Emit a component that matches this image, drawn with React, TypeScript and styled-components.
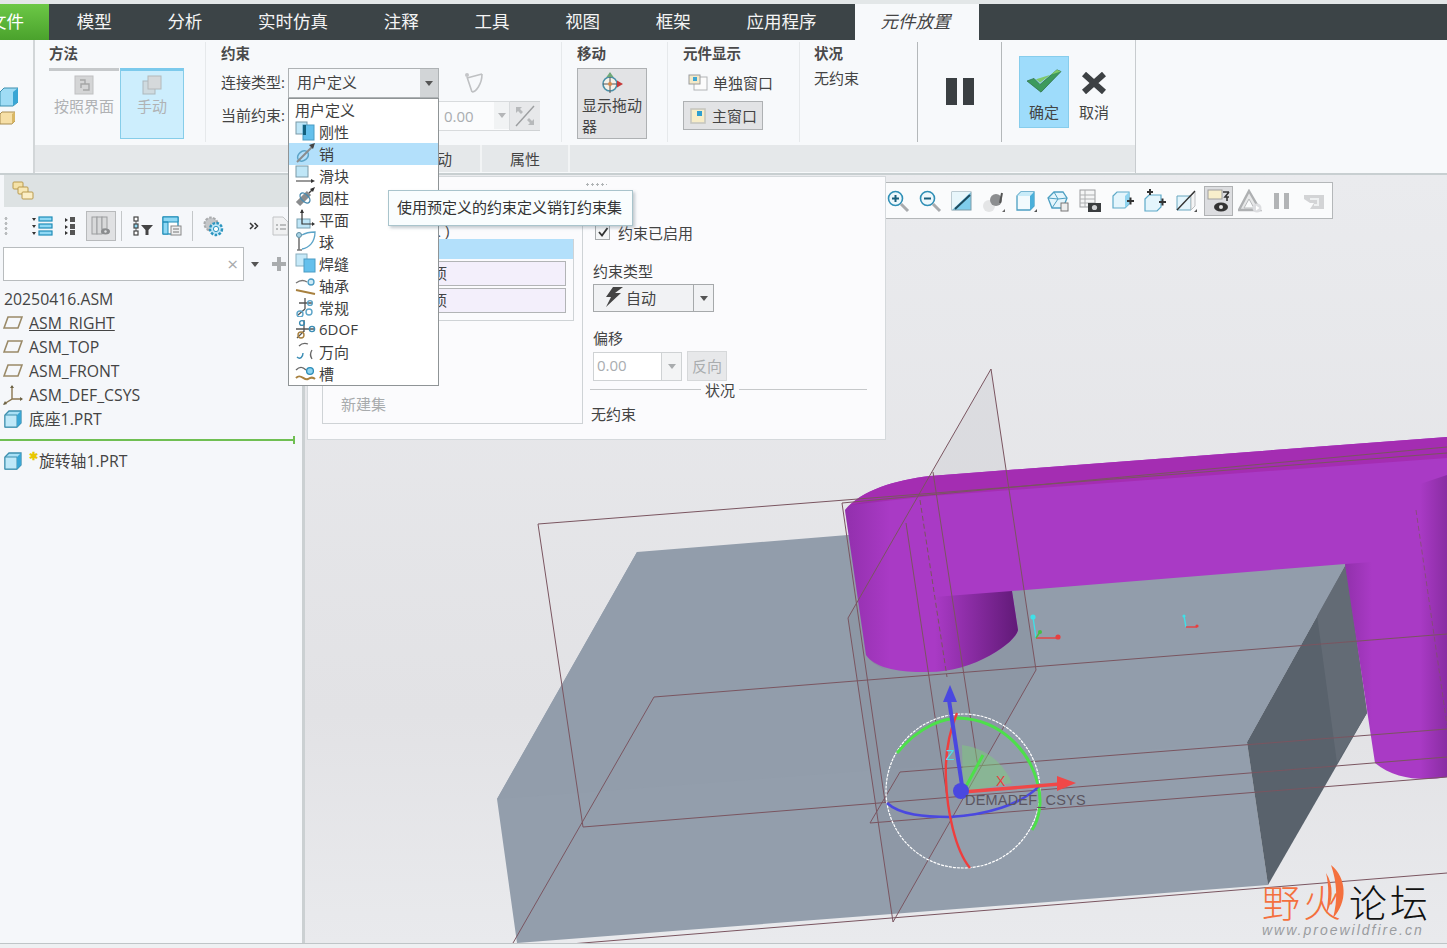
import React from 'react';
import styled, { createGlobalStyle } from 'styled-components';

const GlobalStyle = createGlobalStyle`
  html, body {
    margin: 0;
    padding: 0;
    background: #f7f9fb;
  }
  body {
    font-family: "Open Sans", "Noto Sans CJK SC", sans-serif;
    color: #444;
  }
  * { box-sizing: border-box; }
`;

const Page = styled.div`
  position: relative;
  width: 1447px;
  height: 948px;
  overflow: hidden;
  display: flex;
  flex-direction: column;
  background: #f7f9fb;
`;

const TopStrip = styled.div`
  height: 4px;
  background: #e3e7e8;
`;

const TabBar = styled.div`
  height: 36px;
  display: flex;
  align-items: center;
  background: #3c4447;
  color: #f4f4f4;
  font-size: 17.5px;
`;

const FileTab = styled.div`
  width: 49px;
  height: 100%;
  display: flex;
  align-items: center;
  justify-content: flex-end;
  padding: 0 25px 3px 0;
  white-space: nowrap;
  background: linear-gradient(#6cc846, #4aa22c);
  color: #fff;
`;

const Tab = styled.div`
  height: 100%;
  display: flex;
  align-items: center;
  padding: 0 28px 3px 27.7px;
  white-space: nowrap;
`;

const ActiveTab = styled.div`
  width: 124px;
  height: 100%;
  margin-left: 10px;
  display: flex;
  align-items: center;
  justify-content: center;
  padding: 0 2px 3px 0;
  background: #f7f9fb;
  color: #444;
  font-style: italic;
`;

const Ribbon = styled.div`
  height: 135px;
  display: flex;
  border-bottom: 2px solid #c8cfd1;
`;

const Rail = styled.div`
  width: 35px;
  display: flex;
  flex-direction: column;
  padding-top: 47px;
  gap: 4px;
  border-right: 2px solid #d2d6d8;
`;

const RibbonBody = styled.div`
  width: 1101px;
  display: flex;
  flex-direction: column;
  border-right: 1px solid #c8cccf;
`;

const RibbonGroups = styled.div`
  height: 105px;
  display: flex;
`;

const Group = styled.div<{ $w: number; $strong?: boolean; $pad?: number; $last?: boolean }>`
  width: ${({ $w }) => $w}px;
  margin-top: 2px;
  margin-bottom: 3px;
  padding: 3px 0 0 ${({ $pad }) => $pad ?? 14}px;
  border-right: ${({ $last, $strong }) =>
    $last ? '0' : `1px solid ${$strong ? '#b4b8ba' : '#e6e9eb'}`};
`;

const GroupTitle = styled.div`
  height: 20px;
  margin-bottom: 3px;
  padding-bottom: 2px;
  font-size: 14.5px;
  font-weight: 700;
  line-height: 18px;
  color: #4a4a4a;
`;

const Row = styled.div<{ $gap?: number; $top?: number }>`
  display: flex;
  align-items: center;
  gap: ${({ $gap }) => $gap ?? 0}px;
  margin-top: ${({ $top }) => $top ?? 0}px;
`;

const MethodButton = styled.div<{ $w: number; $active?: boolean }>`
  width: ${({ $w }) => $w}px;
  height: 71px;
  display: flex;
  flex-direction: column;
  align-items: center;
  padding-top: 4px;
  font-size: 15px;
  line-height: 22px;
  color: #b0b2b4;
  border-top: 3px solid ${({ $active }) => ($active ? '#7ccaec' : '#c6c9cb')};
  ${({ $active }) =>
    $active &&
    `background:#cdeefd;border-left:1px solid #86cde9;border-right:1px solid #86cde9;border-bottom:1px solid #86cde9;`}
`;

const FieldLabel = styled.div`
  width: 67px;
  padding-bottom: 3px;
  font-size: 15px;
  white-space: nowrap;
`;

const SelectBox = styled.div`
  width: 151px;
  height: 30px;
  display: flex;
  align-items: center;
  justify-content: space-between;
  padding-left: 8px;
  font-size: 15px;
  line-height: 26px;
  background: #f7f9fb;
  border: 1px solid #aeb2b4;
`;

const SelectText = styled.span`
  margin-top: -3px;
`;

const SelectArrow = styled.div`
  width: 18px;
  height: 100%;
  display: flex;
  align-items: center;
  justify-content: center;
  background: #d2d5d7;
`;

const Caret = styled.span<{ $c?: string }>`
  width: 0;
  height: 0;
  border-left: 4px solid transparent;
  border-right: 4px solid transparent;
  border-top: 5px solid ${({ $c }) => $c ?? '#555'};
`;

const PinSlot = styled.div`
  margin-left: 24px;
  display: flex;
`;

const HiddenField = styled.div`
  width: 151px;
  height: 30px;
`;

const ValueField = styled.div`
  width: 71px;
  height: 30px;
  display: flex;
  align-items: center;
  justify-content: space-between;
  padding: 0 0 1px 5px;
  font-size: 15px;
  color: #a9adb0;
  border: 1px solid #d8dbdd;
  border-left: 0;
  background: #fbfcfd;
`;

const ValueArrow = styled.div`
  width: 15px;
  height: 100%;
  display: flex;
  align-items: center;
  justify-content: center;
  background: #f1f3f4;
`;

const FlipButton = styled.div`
  width: 30px;
  height: 30px;
  display: flex;
  align-items: center;
  justify-content: center;
  background: #e7e8ea;
  border-bottom: 1px solid #cfd2d4;
  border-top: 1px solid #cfd2d4;
`;

const DragButton = styled.div`
  width: 70px;
  height: 71px;
  padding: 3px 0 0 4px;
  font-size: 15px;
  line-height: 21px;
  background: #e2e3e5;
  border: 1px solid #aeb1b3;
`;

const DragIcon = styled.div`
  display: flex;
  justify-content: center;
  height: 23px;
  margin-right: 4px;
`;

const DisplayOption = styled.div<{ $active?: boolean }>`
  width: 100px;
  height: 29px;
  display: flex;
  align-items: center;
  gap: 5px;
  padding-left: 5px;
  font-size: 15px;
  white-space: nowrap;
  ${({ $active }) => $active && `width:80px;background:#e2e3e5;border:1px solid #aeb1b3;`}
`;

const DisplayColumn = styled.div`
  display: flex;
  flex-direction: column;
  gap: 4px;
`;

const StatusText = styled.div`
  font-size: 15px;
  margin-top: -1px;
`;

const PauseBars = styled.div`
  height: 100%;
  display: flex;
  align-items: center;
  justify-content: center;
  gap: 6px;
  padding-bottom: 5px;
`;

const PauseBar = styled.span`
  width: 11px;
  height: 27px;
  background: #3a3f42;
`;

const ConfirmRow = styled.div`
  display: flex;
  gap: 10px;
  padding: 11px 0 0 3px;
`;

const ConfirmButton = styled.div<{ $ok?: boolean }>`
  width: ${({ $ok }) => ($ok ? 50 : 30)}px;
  height: 72px;
  display: flex;
  flex-direction: column;
  align-items: center;
  padding-top: ${({ $ok }) => ($ok ? 12 : 16)}px;
  gap: ${({ $ok }) => ($ok ? 9 : 8)}px;
  font-size: 15px;
  line-height: 20px;
  ${({ $ok }) => $ok && `background:#9edcfb;border:1px solid #87cdec;`}
`;

const SubTabs = styled.div`
  height: 27px;
  display: flex;
  background: #e5e8ea;
`;

const SubSpacer = styled.div`
  width: 359px;
`;

const SubTab = styled.div`
  width: 88px;
  display: flex;
  align-items: center;
  justify-content: center;
  font-size: 15px;
  border-right: 2px solid #f2f4f5;
`;

const Body = styled.div`
  flex: 1;
  display: flex;
  min-height: 0;
`;

const Sidebar = styled.div`
  width: 302px;
  display: flex;
  flex-direction: column;
  background: #f5f7fa;
`;

const Splitter = styled.div`
  width: 3px;
  background: #cbd0d2;
`;

const SideHeader = styled.div`
  height: 32px;
  margin-left: 4px;
  padding: 6px 0 0 8px;
  background: #dde2e3;
`;

const SideTools = styled.div`
  height: 38px;
  display: flex;
  align-items: center;
  padding-left: 4px;
`;

const GripDots = styled.div`
  width: 4px;
  height: 20px;
  margin-right: 22px;
  background: radial-gradient(circle, #b9bcbe 1.4px, transparent 1.6px) 0 0 / 4px 5px;
`;

const SideTool = styled.div<{ $w: number; $active?: boolean; $pl?: number }>`
  width: ${({ $w }) => $w}px;
  height: 30px;
  display: flex;
  align-items: center;
  justify-content: center;
  padding-left: ${({ $pl }) => $pl ?? 0}px;
  ${({ $active }) => $active && `background:#e0e1e3;border:1px solid #b8babc;`}
`;

const ToolDivider = styled.div<{ $l: number; $r: number }>`
  width: 1px;
  height: 30px;
  margin: 0 ${({ $r }) => $r}px 0 ${({ $l }) => $l}px;
  background: #c4c7c9;
`;

const SearchRow = styled.div`
  height: 34px;
  margin: 2px 0 6px 3px;
  display: flex;
  align-items: center;
`;

const SearchInput = styled.div`
  width: 241px;
  height: 100%;
  display: flex;
  align-items: center;
  justify-content: flex-end;
  padding-right: 5px;
  font-size: 19px;
  color: #a8aaac;
  background: #fff;
  border: 1px solid #b8bcbe;
`;

const SearchCaret = styled.div`
  width: 22px;
  display: flex;
  justify-content: center;
`;

const SearchPlus = styled.div`
  margin-left: 6px;
  width: 14px;
  height: 14px;
  background:
    linear-gradient(#a9acae, #a9acae) center / 100% 4px no-repeat,
    linear-gradient(#a9acae, #a9acae) center / 4px 100% no-repeat;
`;

const TreeRow = styled.div<{ $indent?: number }>`
  height: 24px;
  display: flex;
  align-items: center;
  gap: 6px;
  padding-left: ${({ $indent }) => $indent ?? 3}px;
  font-size: 15.8px;
  line-height: 22px;
  color: #444;
  white-space: nowrap;
`;

const TreeLabel = styled.span<{ $underline?: boolean }>`
  margin-top: -1px;
  text-decoration: ${({ $underline }) => ($underline ? 'underline' : 'none')};
`;

const InsertLine = styled.div`
  position: relative;
  height: 2px;
  width: 295px;
  margin: 8px 0 8px;
  background: #6fbf52;
  &::after {
    content: '';
    position: absolute;
    right: 0;
    top: -3px;
    width: 2px;
    height: 8px;
    background: #6fbf52;
  }
`;

const NewStar = styled.span`
  margin-right: -5px;
  align-self: flex-start;
  margin-top: 1px;
  font-size: 11px;
  line-height: 12px;
  color: #e8c800;
  font-weight: 700;
`;

const Canvas = styled.div`
  position: relative;
  flex: 1;
  background: linear-gradient(#eaebee, #e2e2e5 70%, #e9eaed);
`;

const Scene = styled.svg`
  display: block;
  width: 100%;
  height: 100%;
`;

const ViewToolbar = styled.div`
  position: absolute;
  left: 576px;
  top: 7px;
  width: 452px;
  height: 37px;
  display: flex;
  align-items: center;
  background: #fafbfc;
  border: 1px solid #b4b7b9;
`;

const ViewButton = styled.div<{ $active?: boolean }>`
  width: 32px;
  height: 30px;
  display: flex;
  align-items: center;
  justify-content: center;
  ${({ $active }) => $active && `width:29px;margin:0 1px 0 2px;background:#dcdde0;border:1px solid #b0b2b4;`}
`;

const FloatingPanel = styled.div`
  position: absolute;
  left: 2px;
  top: 1px;
  width: 579px;
  height: 264px;
  display: flex;
  background: #fbfbfd;
  border: 1px solid #d5d9dc;
`;

const PanelGrip = styled.div`
  position: absolute;
  left: 277px;
  top: 6px;
  width: 22px;
  height: 3px;
  background: radial-gradient(circle, #b0b4b6 1px, transparent 1.3px) 0 0 / 5px 3px;
`;

const SetBox = styled.div`
  width: 261px;
  height: 224px;
  margin: 23px 0 0 14px;
  display: flex;
  flex-direction: column;
  background: #fbfbfd;
  border: 1px solid #cfd3d6;
  border-top: 0;
`;

const SetHead = styled.div`
  height: 16px;
  padding-left: 103px;
  font-size: 15px;
  line-height: 14px;
  margin-top: 23px;
  white-space: pre;
`;

const SetInner = styled.div`
  width: 251px;
  padding-bottom: 7px;
  border-right: 1px solid #cfd3d6;
  border-bottom: 1px solid #cfd3d6;
`;

const SetTitle = styled.div`
  height: 20px;
  background: #b3e0fb;
`;

const SetItem = styled.div`
  width: 243px;
  height: 25px;
  margin-top: 2px;
  padding-right: 118px;
  text-align: right;
  font-size: 15px;
  line-height: 22px;
  white-space: nowrap;
  overflow: hidden;
  background: #f3effb;
  border: 1px solid #b2b4b6;
`;

const NewSet = styled.div`
  margin-top: auto;
  padding: 0 0 9px 18px;
  font-size: 15px;
  color: #a8abad;
`;

const PanelRight = styled.div`
  width: 290px;
  margin-left: 8px;
  padding: 46px 0 0 2px;
  display: flex;
  flex-direction: column;
  font-size: 15px;
`;

const CheckRow = styled.div`
  display: flex;
  align-items: center;
  gap: 8px;
  padding-left: 2px;
  height: 18px;
`;

const CheckBox = styled.div`
  width: 15px;
  height: 15px;
  display: flex;
  align-items: center;
  justify-content: center;
  background: #f4f5f6;
  border: 1px solid #a8abad;
`;

const PanelLabel = styled.div<{ $top: number }>`
  margin-top: ${({ $top }) => $top}px;
  height: 20px;
  line-height: 20px;
`;

const TypeSelect = styled.div`
  width: 121px;
  height: 28px;
  margin-top: 3px;
  display: flex;
  background: #f1f2f4;
  border: 1px solid #a6a9ab;
`;

const TypeValue = styled.div`
  flex: 1;
  display: flex;
  align-items: center;
  gap: 3px;
  padding: 0 0 2px 11px;
  border-right: 1px solid #a6a9ab;
`;

const TypeArrow = styled.div`
  width: 19px;
  display: flex;
  align-items: center;
  justify-content: center;
`;

const OffsetField = styled.div`
  width: 89px;
  height: 29px;
  display: flex;
  border: 1px solid #cfd2d4;
  background: #fff;
  color: #a9adb0;
  font-size: 15px;
`;

const OffsetValue = styled.div`
  flex: 1;
  padding-left: 3px;
  line-height: 25px;
  border-right: 1px solid #cfd2d4;
`;

const OffsetArrow = styled.div`
  width: 19px;
  display: flex;
  align-items: center;
  justify-content: center;
  background: #f3f4f5;
`;

const ReverseButton = styled.div`
  width: 40px;
  height: 30px;
  display: flex;
  align-items: center;
  justify-content: center;
  padding-bottom: 1px;
  color: #aaadaf;
  background: #e7e8ea;
  border: 1px solid #d6d8da;
`;

const StatusRule = styled.div`
  width: 277px;
  height: 16px;
  margin: 0 0 0 -3px;
  display: flex;
  align-items: center;
  gap: 4px;
  &::before,
  &::after {
    content: '';
    height: 1px;
    background: #c6c8ca;
  }
  &::before {
    flex: 0 0 111px;
  }
  &::after {
    flex: 1;
  }
`;

const StatusNote = styled.div`
  margin: 6px 0 0 -2px;
`;

const Dropdown = styled.div`
  position: absolute;
  left: 288px;
  top: 98px;
  width: 151px;
  background: #fff;
  border: 1px solid #8f9496;
  font-size: 15px;
`;

const DropRow = styled.div<{ $selected?: boolean }>`
  height: 22px;
  display: flex;
  align-items: center;
  gap: 3px;
  padding: 0 0 2px 6px;
  color: #3e3e3e;
  background: ${({ $selected }) => ($selected ? '#b3e0fb' : 'transparent')};
`;

const Tooltip = styled.div`
  position: absolute;
  left: 388px;
  top: 190px;
  width: 245px;
  height: 36px;
  padding-left: 8px;
  font-size: 15px;
  line-height: 32px;
  color: #333;
  white-space: nowrap;
  background: #f9fdfe;
  border: 1px solid #a9c4cc;
  box-shadow: 2px 2px 3px rgba(90, 110, 120, 0.35);
`;

const Watermark = styled.div`
  position: absolute;
  left: 957px;
  top: 708px;
  width: 170px;
`;

const WatermarkTitle = styled.div`
  display: flex;
  height: 38px;
  font-size: 38px;
  line-height: 38px;
  font-weight: 300;
  letter-spacing: 3px;
  white-space: nowrap;
  color: #111;
  overflow: hidden;
`;

const Fire = styled.span`
  color: #f4703e;
  margin-right: 5px;
`;

const WatermarkUrl = styled.div`
  margin-top: 1px;
  font-family: "Liberation Sans", sans-serif;
  font-size: 14px;
  line-height: 16px;
  font-style: italic;
  letter-spacing: 2px;
  color: #9a9c9f;
  white-space: nowrap;
`;

const BottomStrip = styled.div`
  height: 5px;
  background: #eef0f2;
  border-top: 1px solid #bfc5c7;
`;

/* ---------- icons ---------- */

const Cube = ({ s = 20 }: { s?: number }) => (
  <svg width={s} height={s} viewBox="0 0 20 20">
    <path d="M2 6 L6 2 H18 V14 L14 18 H2 Z" fill="#a9e0f6" stroke="#3d8fae" strokeWidth="1.3" />
    <path d="M2 6 H14 V18 H2 Z" fill="#bfe8f8" stroke="#3d8fae" strokeWidth="1" />
    <path d="M14 6 L18 2 V14 L14 18 Z" fill="#3aa6d4" />
  </svg>
);

const DatumPlane = () => (
  <svg width="20" height="20" viewBox="0 0 20 20">
    <path d="M5 4 H19 L15 15 H1 Z" fill="none" stroke="#9a8a68" strokeWidth="1.6" />
  </svg>
);

const CsysIcon = () => (
  <svg width="20" height="22" viewBox="0 0 20 22">
    <path d="M9 2 V15 L1 20 M9 15 H19" fill="none" stroke="#8a7650" strokeWidth="1.4" />
    <path d="M9 1 L7 4 H11 Z M20 15 L17 13 V17 Z M0 21 L2 17 L4 20 Z" fill="#6d6346" />
  </svg>
);

const LayersIcon = () => (
  <svg width="22" height="20" viewBox="0 0 22 20">
    <rect x="1" y="1" width="10" height="7" rx="1" fill="#f5e2a8" stroke="#b99a4e" />
    <rect x="6" y="6" width="10" height="7" rx="1" fill="#f8e8b6" stroke="#b99a4e" />
    <rect x="10" y="11" width="11" height="7" rx="1" fill="#fbeec6" stroke="#b99a4e" />
  </svg>
);

const ListIcon = () => (
  <svg width="21" height="20" viewBox="0 0 21 20">
    <path d="M0 2 H4 L2 5 Z M0 9 H4 L2 12 Z M0 16 H4 L2 19 Z" fill="#333" />
    <g fill="#8fd8f4" stroke="#1f8db8" strokeWidth="1.2">
      <rect x="7" y="1" width="13" height="4" />
      <rect x="7" y="8" width="13" height="4" />
      <rect x="7" y="15" width="13" height="4" />
    </g>
  </svg>
);

const NodeListIcon = () => (
  <svg width="11" height="20" viewBox="0 0 11 20">
    <path d="M0 2 L3 4 L0 6 Z M0 9 L3 11 L0 13 Z M0 15 L3 17 L0 19 Z" fill="#333" />
    <g fill="#555">
      <rect x="5" y="1" width="5" height="5" />
      <rect x="5" y="8" width="5" height="5" />
      <rect x="5" y="14" width="5" height="5" />
    </g>
  </svg>
);

const ColumnsEyeIcon = () => (
  <svg width="20" height="20" viewBox="0 0 20 20">
    <g fill="#d8d9da" stroke="#9b9d9f">
      <rect x="1" y="1" width="5" height="17" />
      <rect x="6" y="1" width="5" height="17" />
      <rect x="11" y="1" width="5" height="12" />
    </g>
    <ellipse cx="14.5" cy="15.5" rx="4.5" ry="3" fill="#8a8c8e" />
    <circle cx="14.5" cy="15.5" r="1.2" fill="#e0e1e3" />
  </svg>
);

const TreeFilterIcon = () => (
  <svg width="20" height="20" viewBox="0 0 20 20">
    <path d="M3 5 V15" stroke="#666" />
    <g fill="#fff" stroke="#444" strokeWidth="1.2">
      <rect x="1" y="1" width="4" height="4" />
      <rect x="1" y="8" width="4" height="4" fill="#8fd8f4" />
      <rect x="1" y="15" width="4" height="4" />
    </g>
    <path d="M8 9 H20 L15.5 14 V19 H12.5 V14 Z" fill="#444" />
  </svg>
);

const TableDocIcon = () => (
  <svg width="20" height="20" viewBox="0 0 20 20">
    <rect x="1" y="1" width="15" height="17" fill="#fff" stroke="#1f8db8" strokeWidth="1.3" />
    <path d="M1 1 H16 V6 H1 Z M1 6 H6 V18 H1 Z" fill="#8fd8f4" stroke="#1f8db8" />
    <rect x="9" y="10" width="10" height="9" fill="#eeeff0" stroke="#888" />
    <path d="M11 13 H17 M11 16 H17" stroke="#777" />
  </svg>
);

const GearIcon = () => (
  <svg width="21" height="21" viewBox="0 0 21 21">
    <circle cx="8" cy="8" r="6.5" fill="#c4c6c8" stroke="#a8aaac" strokeWidth="2" strokeDasharray="2.5 1.5" />
    <circle cx="13" cy="13" r="6" fill="#bfe6f7" stroke="#2b95bf" strokeWidth="2.4" strokeDasharray="2.6 1.4" />
    <circle cx="13" cy="13" r="2.6" fill="#fff" stroke="#2b95bf" />
  </svg>
);

const DoubleChevron = () => (
  <svg width="10" height="8" viewBox="0 0 10 8">
    <path d="M1 1 L4 4 L1 7 M5.5 1 L8.5 4 L5.5 7" fill="none" stroke="#333" strokeWidth="1.5" />
  </svg>
);

const DocListIcon = () => (
  <svg width="17" height="20" viewBox="0 0 17 20">
    <path d="M1 1 H11 L16 6 V19 H1 Z" fill="#f0f1f2" stroke="#c2c4c6" />
    <path d="M4 9 H6 M8 9 H14 M4 13 H6 M8 13 H14" stroke="#a8aaac" strokeWidth="1.4" />
  </svg>
);

const GuideIcon = () => (
  <svg width="20" height="20" viewBox="0 0 20 20">
    <rect x="1" y="1" width="18" height="18" fill="#d4d5d6" stroke="#bfc0c1" />
    <path d="M6 5 H11 V9 H7 V13 M11 9 H15 V15 H9" fill="none" stroke="#a5a6a7" strokeWidth="1.4" />
  </svg>
);

const ManualIcon = () => (
  <svg width="20" height="20" viewBox="0 0 20 20">
    <rect x="1" y="6" width="12" height="13" fill="#cfdbe0" stroke="#adb8bd" />
    <rect x="6" y="1" width="13" height="13" fill="#d5d9db" stroke="#b4b8ba" />
  </svg>
);

const PinDisabledIcon = () => (
  <svg width="22" height="22" viewBox="0 0 22 22">
    <circle cx="4" cy="3" r="2" fill="#c4c6c8" />
    <path d="M4 5 L9 20 M4 6 L19 2 M19 2 C19 12 13 20 9 20" fill="none" stroke="#bfc1c3" strokeWidth="1.6" />
  </svg>
);

const FlipIcon = () => (
  <svg width="24" height="24" viewBox="0 0 24 24">
    <path d="M3 22 L21 2" stroke="#9c9ea0" strokeWidth="1.4" />
    <path d="M3 3 H9 L7 5 L10 8 L8 10 L5 7 L3 9 Z M21 21 H15 L17 19 L14 16 L16 14 L19 17 L21 15 Z" fill="#b7b9bb" />
  </svg>
);

const DraggerIcon = () => (
  <svg width="24" height="22" viewBox="0 0 24 22">
    <circle cx="10" cy="12" r="7" fill="#f6f2e8" stroke="#4a90a8" strokeWidth="1.6" />
    <path d="M10 1 V21 M3 12 H21" stroke="#555" />
    <path d="M10 0 L6.5 5 H13.5 Z" fill="#6fa878" />
    <path d="M23 12 L17 8.5 V15.5 Z" fill="#c63a3a" />
    <circle cx="10" cy="12" r="2" fill="#d98a4a" />
  </svg>
);

const WindowSingleIcon = () => (
  <svg width="20" height="18" viewBox="0 0 20 18">
    <rect x="6" y="3" width="13" height="13" fill="#fbfbfb" stroke="#b2b4b6" />
    <rect x="1" y="1" width="11" height="9" fill="#f3e9c8" stroke="#9a9c9e" />
    <rect x="5" y="3" width="4" height="4" fill="#3fa6d2" />
  </svg>
);

const WindowMainIcon = () => (
  <svg width="18" height="18" viewBox="0 0 18 18">
    <rect x="2" y="2" width="14" height="14" fill="#f7edc8" stroke="#c6c6c0" strokeWidth="1.6" />
    <rect x="8" y="4" width="5" height="5" fill="#2f9fd0" />
  </svg>
);

const CheckMark = () => (
  <svg width="36" height="24" viewBox="0 0 36 28" preserveAspectRatio="none">
    <path d="M1 14 L8 11 L14 18 L31 1 L35 3 L15 27 Z" fill="#3d9a5c" stroke="#2f6f48" strokeWidth="0.8" />
    <path d="M10 12 L14 16 L31 1 L35 3 Z" fill="#7fc96a" />
  </svg>
);

const CrossMark = () => (
  <svg width="26" height="22" viewBox="0 0 26 22">
    <path d="M3 2 L23 20 M23 2 L3 20" stroke="#3d4144" strokeWidth="6" />
  </svg>
);

const BoltIcon = () => (
  <svg width="18" height="22" viewBox="0 0 18 22">
    <path d="M8 1 H18 L10 7 H16 L1 21 L6 11 H1 Z" fill="#444" />
  </svg>
);

const RailCubes = () => (
  <>
    <svg width="18" height="20" viewBox="0 0 18 20">
      <path d="M0 5 L4 1 H18 V15 L13 19 H0 Z" fill="#9fdcf5" stroke="#3d8fae" />
      <path d="M13 5 L18 1 V15 L13 19 Z" fill="#3aa6d4" />
    </svg>
    <svg width="15" height="14" viewBox="0 0 15 14">
      <path d="M0 3 L2 1 H15 V10 L12 13 H0 Z" fill="#f6dfa6" stroke="#a98e52" />
      <path d="M12 3 L15 1 V10 L12 13 Z" fill="#d9b765" />
    </svg>
  </>
);

const dropIcons: Record<string, React.ReactNode> = {
  rigid: (
    <>
      <rect x="1" y="1" width="11" height="12" fill="#bfe6f7" stroke="#7a9aa8" />
      <rect x="8" y="4" width="11" height="15" fill="#64c0ec" stroke="#4a9cc4" />
      <rect x="8" y="4" width="3" height="10" fill="#12607e" />
    </>
  ),
  pin: (
    <>
      <ellipse cx="8" cy="13" rx="6" ry="4.5" fill="none" stroke="#5ca4c8" strokeWidth="1.5" transform="rotate(-40 8 13)" />
      <path d="M2 19 L18 3" stroke="#8a8c8e" strokeWidth="2" />
      <path d="M20 0 L14 2 L18 6 Z" fill="#444" />
    </>
  ),
  slider: (
    <>
      <rect x="1" y="1" width="12" height="11" fill="#bfe6f7" stroke="#7a9aa8" />
      <path d="M1 16 H17" stroke="#555" strokeWidth="1.2" />
      <path d="M20 16 L16 14 V18 Z" fill="#333" />
    </>
  ),
  cylinder: (
    <>
      <path d="M3 17 L14 6" stroke="#8a8c8e" strokeWidth="6" />
      <ellipse cx="10" cy="11" rx="6" ry="3.5" fill="none" stroke="#4a8cb0" strokeWidth="1.5" transform="rotate(45 10 11)" />
      <path d="M14 6 L18 2" stroke="#444" strokeWidth="1.4" />
      <path d="M20 0 L15 2 L18 5 Z" fill="#333" />
    </>
  ),
  planar: (
    <>
      <rect x="2" y="10" width="13" height="9" fill="#bfe6f7" stroke="#7aa0b0" />
      <path d="M7 1 V15 H18" fill="none" stroke="#333" strokeWidth="1.2" />
      <path d="M7 0 L5 4 H9 Z M20 15 L17 13 V17 Z" fill="#333" />
    </>
  ),
  ball: (
    <>
      <circle cx="4" cy="4" r="2.5" fill="#a8d4e6" stroke="#5a8aa0" />
      <path d="M4 7 V19 M2 19 H7" stroke="#777" strokeWidth="1.6" />
      <path d="M7 4 C12 1 17 1 20 1 C20 11 14 17 7 18" fill="none" stroke="#5ca4c8" strokeWidth="1.3" />
    </>
  ),
  weld: (
    <>
      <rect x="1" y="1" width="11" height="12" fill="#c6e9f8" stroke="#8ab0c0" />
      <rect x="9" y="6" width="11" height="13" fill="#64c0ec" stroke="#4a9cc4" />
    </>
  ),
  bearing: (
    <>
      <path d="M1 8 C5 5 9 5 12 7" fill="none" stroke="#777" strokeWidth="1.3" />
      <circle cx="16" cy="7" r="3" fill="#cdeaf6" stroke="#4a9cc4" strokeWidth="1.3" />
      <path d="M1 15 L20 19" stroke="#a8803e" strokeWidth="2" />
    </>
  ),
  general: (
    <>
      <path d="M10 1 V12 M4 6 H17 M3 18 L10 12" stroke="#555" strokeWidth="1.3" />
      <circle cx="5" cy="17" r="3" fill="none" stroke="#5ca4c8" strokeWidth="1.4" />
      <circle cx="14" cy="15" r="3" fill="none" stroke="#5ca4c8" strokeWidth="1.4" />
      <circle cx="15" cy="6" r="2.4" fill="none" stroke="#5ca4c8" strokeWidth="1.4" />
    </>
  ),
  dof: (
    <>
      <path d="M9 1 V13 M1 10 H20 M2 19 L9 12" stroke="#555" strokeWidth="1.3" />
      <circle cx="17" cy="10" r="2.6" fill="none" stroke="#3a8cb4" strokeWidth="1.4" />
      <circle cx="6" cy="16" r="3" fill="none" stroke="#a8803e" strokeWidth="1.4" />
      <circle cx="7" cy="4" r="2.4" fill="none" stroke="#3a8cb4" strokeWidth="1.4" />
    </>
  ),
  universal: (
    <>
      <path d="M4 5 C7 2 10 2 13 3" fill="none" stroke="#666" strokeWidth="1.3" />
      <path d="M8 12 C8 16 5 19 2 16" fill="none" stroke="#3a8cb4" strokeWidth="1.4" />
      <path d="M17 9 C15 12 15 15 17 18" fill="none" stroke="#666" strokeWidth="1.3" />
    </>
  ),
  slot: (
    <>
      <path d="M1 7 C5 3 8 4 11 7" fill="none" stroke="#666" strokeWidth="1.3" />
      <circle cx="15" cy="8" r="3.4" fill="#8fd4f0" stroke="#2b8cb8" strokeWidth="1.3" />
      <path d="M1 15 C6 10 9 18 13 16 C16 14 18 14 20 16" fill="none" stroke="#a8803e" strokeWidth="2" />
    </>
  ),
};

const DropIcon = ({ name }: { name: string }) => (
  <svg width="21" height="20" viewBox="0 0 21 20">
    {dropIcons[name]}
  </svg>
);

const smallCube = (
  <path d="M3 7 L7 3 H19 V15 L15 19 H3 Z" fill="#e4f5fc" stroke="#5eaac8" strokeWidth="1.2" />
);

const viewIcons: React.ReactNode[] = [
  <>
    <circle cx="9.5" cy="9.5" r="7" fill="#eef8fc" stroke="#2f8fb6" strokeWidth="1.6" />
    <path d="M6 9.5 H13 M9.5 6 V13" stroke="#1a5f7c" strokeWidth="2" />
    <path d="M15 15 L22 22" stroke="#a9abad" strokeWidth="3" />
  </>,
  <>
    <circle cx="9.5" cy="9.5" r="7" fill="#eef8fc" stroke="#2f8fb6" strokeWidth="1.6" />
    <path d="M6 9.5 H13" stroke="#1a5f7c" strokeWidth="2" />
    <path d="M15 15 L22 22" stroke="#a9abad" strokeWidth="3" />
  </>,
  <>
    <rect x="2" y="3" width="19" height="18" fill="#7fcdec" stroke="#7f9ca8" />
    <path d="M2 3 H21 L2 21 Z" fill="#e8f6fb" />
    <path d="M5 20 L20 6" stroke="#1c4a5e" strokeWidth="2" />
  </>,
  <>
    <circle cx="7" cy="17" r="6" fill="#e4e5e6" />
    <circle cx="14" cy="11" r="6" fill="#8c8e90" />
    <path d="M20 4 L18 14" stroke="#555" strokeWidth="2" />
    <path d="M23 20 L23 23 L20 23 Z" fill="#666" />
  </>,
  <>
    <path d="M3 7 L7 3 H20 V17 L16 21 H3 Z" fill="#f2fafd" stroke="#4c9fc2" strokeWidth="1.3" />
    <path d="M3 7 L7 3 H20 L16 7 Z" fill="#c8ebf8" />
    <path d="M16 7 L20 3 V17 L16 21 Z" fill="#4bb0da" />
    <path d="M23 20 L23 23 L20 23 Z" fill="#555" />
  </>,
  <>
    <path d="M2 9 L8 3 H17 L21 9 L17 19 H6 Z" fill="#e4f5fc" stroke="#4c9fc2" strokeWidth="1.3" />
    <path d="M8 3 L12 10 L21 9 M12 10 L6 19 M12 10 L2 9" fill="none" stroke="#4c9fc2" />
    <rect x="15" y="14" width="7" height="8" fill="#eee" stroke="#777" />
  </>,
  <>
    <rect x="2" y="1" width="15" height="17" fill="#f4f5f6" stroke="#9b9d9f" />
    <path d="M2 6 H17 M2 10 H17 M2 14 H17 M7 1 V18" stroke="#aeb0b2" />
    <rect x="10" y="14" width="13" height="9" fill="#3a3d3f" />
    <circle cx="16.5" cy="18.5" r="2.6" fill="#d0d2d4" />
  </>,
  <>
    {smallCube}
    <path d="M15 7 L19 3 V15 L15 19 Z" fill="#8fd4f0" />
    <path d="M17 12 H24 M20.5 8.5 V15.5" stroke="#333" strokeWidth="2" />
  </>,
  <>
    <g transform="translate(0 3)">{smallCube}</g>
    <path d="M8 0 V6 M5 3 H11" stroke="#333" strokeWidth="2" />
    <path d="M17 13 H24 M20.5 9.5 V16.5" stroke="#333" strokeWidth="2" />
  </>,
  <>
    <path d="M3 7 H17 V21 H3 Z" fill="#e4f5fc" stroke="#6aa8c0" />
    <path d="M17 7 L21 3 V17 L17 21 Z" fill="#f3f4f5" stroke="#bcbec0" />
    <path d="M3 21 L21 2" stroke="#333" strokeWidth="1.4" />
    <path d="M23 20 L23 23 L20 23 Z" fill="#555" />
  </>,
  <>
    <rect x="1" y="1" width="14" height="9" fill="#f8efcc" stroke="#a0a0a0" />
    <path d="M16 3 H22 M22 3 L18 8 H22 M20 8 V12" fill="none" stroke="#333" strokeWidth="1.6" />
    <ellipse cx="14" cy="18" rx="7" ry="4.5" fill="#333" />
    <circle cx="14" cy="18" r="2" fill="#e6e6e6" />
  </>,
  <>
    <path d="M11 2 L22 21 H1 Z" fill="#e6e7e8" stroke="#aeb0b2" strokeWidth="2.4" />
    <path d="M11 10 L16 19 H6 Z" fill="#fafbfc" stroke="#b8babc" />
    <circle cx="19" cy="19" r="4.5" fill="#dcdde0" />
    <path d="M18 16.5 L21.5 19 L18 21.5 Z" fill="#fff" />
  </>,
  <>
    <rect x="4" y="4" width="5" height="16" fill="#b2b4b6" />
    <rect x="14" y="4" width="5" height="16" fill="#b2b4b6" />
  </>,
  <>
    <path d="M2 6 H22 V20 H8 L12 14 H8 L2 10 Z" fill="#d3d4d6" />
    <path d="M8 10 H16 V16 H12" fill="none" stroke="#eef0f1" strokeWidth="2" />
  </>,
];

const dropItems: [string, string][] = [
  ['rigid', '刚性'],
  ['pin', '销'],
  ['slider', '滑块'],
  ['cylinder', '圆柱'],
  ['planar', '平面'],
  ['ball', '球'],
  ['weld', '焊缝'],
  ['bearing', '轴承'],
  ['general', '常规'],
  ['dof', '6DOF'],
  ['universal', '万向'],
  ['slot', '槽'],
];

const mainTabs = ['模型', '分析', '实时仿真', '注释', '工具', '视图', '框架', '应用程序'];

const wire: [number, number, number, number][] = [
  [538, 524, 1447, 453],
  [842, 503, 1447, 447],
  [538, 524, 583, 827],
  [583, 827, 1447, 757],
  [654, 697, 1447, 634],
  [654, 697, 513, 943],
  [558, 945, 1447, 873],
  [900, 772, 1447, 729],
  [870, 823, 1447, 777],
  [870, 823, 900, 772],
  [842, 503, 885, 802],
  [906, 523, 950, 817],
  [933, 472, 978, 767],
];

const SceneDrawing = () => (
  <Scene viewBox="305 175 1142 768">
    <defs>
      <linearGradient id="leftShade" gradientUnits="userSpaceOnUse" x1="845" y1="0" x2="890" y2="0">
        <stop offset="0" stopColor="#6f2088" stopOpacity="0.4" />
        <stop offset="1" stopColor="#6f2088" stopOpacity="0" />
      </linearGradient>
      <linearGradient id="innerShade" gradientUnits="userSpaceOnUse" x1="935" y1="0" x2="1016" y2="0">
        <stop offset="0" stopColor="#4b1060" stopOpacity="0" />
        <stop offset="1" stopColor="#4b1060" stopOpacity="0.75" />
      </linearGradient>
      <linearGradient id="rightShade" gradientUnits="userSpaceOnUse" x1="1420" y1="0" x2="1447" y2="0">
        <stop offset="0" stopColor="#5a1a70" stopOpacity="0" />
        <stop offset="1" stopColor="#5a1a70" stopOpacity="0.4" />
      </linearGradient>
      <linearGradient id="legShade" gradientUnits="userSpaceOnUse" x1="1345" y1="0" x2="1372" y2="0">
        <stop offset="0" stopColor="#5a1a70" stopOpacity="0.3" />
        <stop offset="1" stopColor="#5a1a70" stopOpacity="0" />
      </linearGradient>
    </defs>

    {/* gray base block */}
    <path d="M637 552 L1346 564 L1247 742 L1268 885 L517 943 L497 799 Z" fill="#939eac" />
    <path d="M1346 564 L1367 713 L1268 885 L1247 742 Z" fill="#59626c" />
    <path d="M1346 564 L1367 713 L1337 763 L1317 615 Z" fill="#636b75" />
    <path d="M637 552 L860 534 L860 620 L1036 570 L1346 564 L1247 742 L497 799 Z" fill="#929dab" />
    <path d="M991 369 L848 618 L893 922 L1036 670 Z" fill="#5c5560" fillOpacity="0.07" />

    {/* purple part */}
    <path
      d="M845 510 C862 490 895 480 930 476 L1447 437 L1447 777 C1425 781 1395 780 1375 763 L1345 564 L1012 591 L1018 630 C1016 642 975 672 928 672 C900 673 875 668 866 655 Z"
      fill="#a93ac5"
    />
    <path d="M845 510 C862 490 895 480 930 476 L1447 437 L1447 458 L930 496 L850 505 Z" fill="#a42db2" />
    <path d="M845 510 L866 655 C875 668 890 672 900 672 L900 495 L850 505 Z" fill="url(#leftShade)" />
    <path d="M934 597 L1012 591 L1018 630 C1016 642 975 672 928 672 Z" fill="url(#innerShade)" />
    <path d="M1420 484 L1447 475 L1447 777 L1420 779 Z" fill="url(#rightShade)" />
    <path d="M1345 564 L1375 763 L1390 772 L1372 562 Z" fill="url(#legShade)" />

    {/* datum outlines */}
    <g stroke="#7a5560" strokeWidth="1" fill="none">
      {wire.map(([x1, y1, x2, y2]) => (
        <line key={`${x1}-${y1}-${x2}-${y2}`} x1={x1} y1={y1} x2={x2} y2={y2} />
      ))}
      <path d="M991 369 L848 618 L893 922 L1036 670 Z" />
      <line x1="920" y1="500" x2="947" y2="677" strokeDasharray="5 3" />
      <line x1="1416" y1="510" x2="1447" y2="725" strokeDasharray="5 3" strokeOpacity="0.7" />
    </g>

    {/* small csys markers */}
    <g strokeWidth="1.4" fill="none">
      <path d="M1036 638 L1033 617" stroke="#3fe0e8" />
      <path d="M1036 638 H1058" stroke="#e84040" />
      <path d="M1036 638 L1040 632" stroke="#45c045" />
      <path d="M1186 627 L1184 616" stroke="#3fe0e8" />
      <path d="M1186 627 H1197" stroke="#e84040" />
    </g>
    <circle cx="1033" cy="617" r="2.6" fill="#3fe0e8" />
    <circle cx="1058" cy="637" r="2.6" fill="#e84040" />
    <circle cx="1040" cy="632" r="2" fill="#45c045" />
    <circle cx="1184" cy="616" r="1.6" fill="#3fe0e8" />
    <circle cx="1197" cy="626" r="1.6" fill="#e84040" />

    {/* 3D dragger */}
    <path d="M962 745 C985 748 1003 762 1012 783 L963 792 Z" fill="#7fd07a" fillOpacity="0.45" />
    <circle cx="963" cy="791" r="77" fill="none" stroke="#fff" strokeWidth="1.2" strokeDasharray="3 1" />
    <path d="M897 753 C920 725 945 718 960 718 C1000 720 1030 750 1038 785 C1042 800 1040 818 1032 830" fill="none" stroke="#4de04a" strokeWidth="3" />
    <path d="M887 803 C900 815 925 817 950 817 C985 815 1022 805 1040 785" fill="none" stroke="#4a48e0" strokeWidth="2.6" />
    <path d="M957 713 C948 735 945 760 946 780 C947 810 955 850 970 868" fill="none" stroke="#ef3e3e" strokeWidth="2.4" />
    <path d="M963 792 L983 755" stroke="#4de04a" strokeWidth="3" />
    <path d="M963 792 L949 700" stroke="#4a48e0" strokeWidth="4" />
    <path d="M950 685 L943 702 H957 Z" fill="#4a48e0" />
    <path d="M963 792 L1060 784" stroke="#f04848" strokeWidth="3.4" />
    <path d="M1076 783 L1057 776 V791 Z" fill="#f04848" />
    <circle cx="961" cy="791" r="8" fill="#4a48e0" />
    <text x="946" y="760" fontSize="14" fill="#4fdcea" fontFamily="Liberation Sans, sans-serif">Z</text>
    <text x="996" y="786" fontSize="14" fill="#e84040" fontFamily="Liberation Sans, sans-serif">X</text>
    <text x="965" y="805" fontSize="14.5" fill="#5b5560" letterSpacing="0.2" fontFamily="Liberation Sans, sans-serif">DEMADEF_CSYS</text>

    {/* forum flame */}
    <path d="M1331 865 C1347 878 1348 902 1333 918 C1338 900 1337 882 1331 865 Z" fill="#f4703e" />
    <path d="M1326 873 C1334 885 1333 902 1326 914 C1329 898 1329 886 1326 873 Z" fill="#f4703e" />
  </Scene>
);

const App: React.FC = () => (
  <Page>
    <GlobalStyle />
    <TopStrip />
    <TabBar>
      <FileTab>文件</FileTab>
      {mainTabs.map((name) => (
        <Tab key={name}>{name}</Tab>
      ))}
      <ActiveTab>元件放置</ActiveTab>
    </TabBar>

    <Ribbon>
      <Rail>
        <RailCubes />
      </Rail>
      <RibbonBody>
        <RibbonGroups>
          <Group $w={171}>
            <GroupTitle>方法</GroupTitle>
            <Row $gap={1}>
              <MethodButton $w={70}>
                <GuideIcon />
                按照界面
              </MethodButton>
              <MethodButton $w={64} $active>
                <ManualIcon />
                手动
              </MethodButton>
            </Row>
          </Group>

          <Group $w={356} $pad={15}>
            <GroupTitle>约束</GroupTitle>
            <Row>
              <FieldLabel>连接类型:</FieldLabel>
              <SelectBox>
                <SelectText>用户定义</SelectText>
                <SelectArrow>
                  <Caret />
                </SelectArrow>
              </SelectBox>
              <PinSlot>
                <PinDisabledIcon />
              </PinSlot>
            </Row>
            <Row $top={3}>
              <FieldLabel>当前约束:</FieldLabel>
              <HiddenField />
              <ValueField>
                0.00
                <ValueArrow>
                  <Caret $c="#b4b6b8" />
                </ValueArrow>
              </ValueField>
              <FlipButton>
                <FlipIcon />
              </FlipButton>
            </Row>
          </Group>

          <Group $w={106} $pad={15}>
            <GroupTitle>移动</GroupTitle>
            <DragButton>
              <DragIcon>
                <DraggerIcon />
              </DragIcon>
              显示拖动
              <br />
              器
            </DragButton>
          </Group>

          <Group $w={132} $pad={15}>
            <GroupTitle>元件显示</GroupTitle>
            <DisplayColumn>
              <DisplayOption>
                <WindowSingleIcon />
                单独窗口
              </DisplayOption>
              <DisplayOption $active>
                <WindowMainIcon />
                主窗口
              </DisplayOption>
            </DisplayColumn>
          </Group>

          <Group $w={118} $strong>
            <GroupTitle>状况</GroupTitle>
            <StatusText>无约束</StatusText>
          </Group>

          <Group $w={84} $strong $pad={0}>
            <PauseBars>
              <PauseBar />
              <PauseBar />
            </PauseBars>
          </Group>

          <Group $w={133} $last>
            <ConfirmRow>
              <ConfirmButton $ok>
                <CheckMark />
                确定
              </ConfirmButton>
              <ConfirmButton>
                <CrossMark />
                取消
              </ConfirmButton>
            </ConfirmRow>
          </Group>
        </RibbonGroups>
        <SubTabs>
          <SubSpacer />
          <SubTab>移动</SubTab>
          <SubTab>属性</SubTab>
        </SubTabs>
      </RibbonBody>
    </Ribbon>

    <Body>
      <Sidebar>
        <SideHeader>
          <LayersIcon />
        </SideHeader>
        <SideTools>
          <GripDots />
          <SideTool $w={24}>
            <ListIcon />
          </SideTool>
          <SideTool $w={32}>
            <NodeListIcon />
          </SideTool>
          <SideTool $w={30} $active>
            <ColumnsEyeIcon />
          </SideTool>
          <ToolDivider $l={5} $r={7} />
          <SideTool $w={28}>
            <TreeFilterIcon />
          </SideTool>
          <SideTool $w={30}>
            <TableDocIcon />
          </SideTool>
          <ToolDivider $l={5} $r={6} />
          <SideTool $w={28}>
            <GearIcon />
          </SideTool>
          <SideTool $w={45} $pl={8}>
            <DoubleChevron />
          </SideTool>
          <SideTool $w={17}>
            <DocListIcon />
          </SideTool>
        </SideTools>
        <SearchRow>
          <SearchInput>×</SearchInput>
          <SearchCaret>
            <Caret />
          </SearchCaret>
          <SearchPlus />
        </SearchRow>
        <TreeRow $indent={4}>20250416.ASM</TreeRow>
        <TreeRow>
          <DatumPlane />
          <TreeLabel $underline>ASM_RIGHT</TreeLabel>
        </TreeRow>
        <TreeRow>
          <DatumPlane />
          <TreeLabel>ASM_TOP</TreeLabel>
        </TreeRow>
        <TreeRow>
          <DatumPlane />
          <TreeLabel>ASM_FRONT</TreeLabel>
        </TreeRow>
        <TreeRow>
          <CsysIcon />
          <TreeLabel>ASM_DEF_CSYS</TreeLabel>
        </TreeRow>
        <TreeRow>
          <Cube s={20} />
          <TreeLabel>底座1.PRT</TreeLabel>
        </TreeRow>
        <InsertLine />
        <TreeRow>
          <Cube s={20} />
          <NewStar>✱</NewStar>
          <TreeLabel>旋转轴1.PRT</TreeLabel>
        </TreeRow>
      </Sidebar>
      <Splitter />
      <Canvas>
        <SceneDrawing />
        <ViewToolbar>
          {viewIcons.map((icon, i) => (
            <ViewButton key={i} $active={i === 10}>
              <svg width="24" height="24" viewBox="0 0 24 24">
                {icon}
              </svg>
            </ViewButton>
          ))}
        </ViewToolbar>
        <FloatingPanel>
          <PanelGrip />
          <SetBox>
            <SetHead>义 )</SetHead>
            <SetInner>
              <SetTitle />
              <SetItem>选择元件项</SetItem>
              <SetItem>选择组件项</SetItem>
            </SetInner>
            <NewSet>新建集</NewSet>
          </SetBox>
          <PanelRight>
            <CheckRow>
              <CheckBox>
                <svg width="12" height="12" viewBox="0 0 12 12">
                  <path d="M2 6 L5 9.5 L10.5 2" fill="none" stroke="#333" strokeWidth="1.8" />
                </svg>
              </CheckBox>
              约束已启用
            </CheckRow>
            <PanelLabel $top={20}>约束类型</PanelLabel>
            <TypeSelect>
              <TypeValue>
                <BoltIcon />
                自动
              </TypeValue>
              <TypeArrow>
                <Caret />
              </TypeArrow>
            </TypeSelect>
            <PanelLabel $top={16}>偏移</PanelLabel>
            <Row $gap={5} $top={3}>
              <OffsetField>
                <OffsetValue>0.00</OffsetValue>
                <OffsetArrow>
                  <Caret $c="#a9acae" />
                </OffsetArrow>
              </OffsetField>
              <ReverseButton>反向</ReverseButton>
            </Row>
            <StatusRule>状况</StatusRule>
            <StatusNote>无约束</StatusNote>
          </PanelRight>
        </FloatingPanel>
        <Watermark>
          <WatermarkTitle>
            <Fire>野火</Fire>
            论坛
          </WatermarkTitle>
          <WatermarkUrl>www.proewildfire.cn</WatermarkUrl>
        </Watermark>
      </Canvas>
    </Body>
    <BottomStrip />

    <Dropdown>
      <DropRow>用户定义</DropRow>
      {dropItems.map(([icon, label]) => (
        <DropRow key={icon} $selected={icon === 'pin'}>
          <DropIcon name={icon} />
          {label}
        </DropRow>
      ))}
    </Dropdown>
    <Tooltip>使用预定义的约束定义销钉约束集</Tooltip>
  </Page>
);

export default App;
